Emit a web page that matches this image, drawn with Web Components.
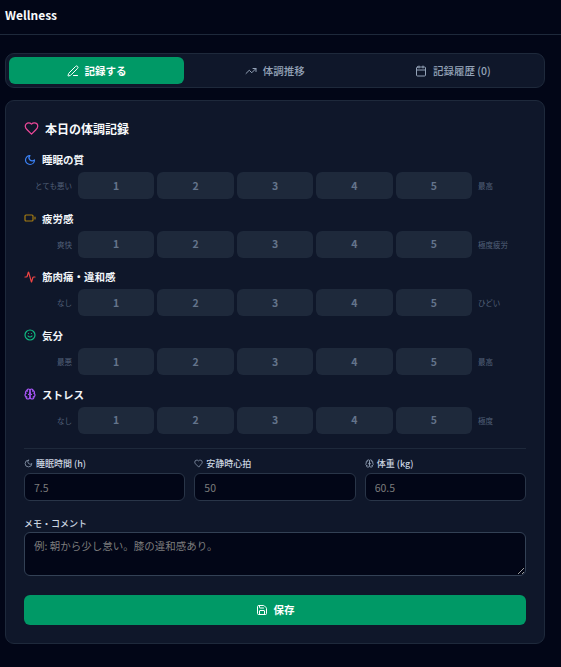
<!DOCTYPE html>
<html lang="ja">
<head>
<meta charset="utf-8">
<title>Wellness</title>
<style>
  html, body { margin: 0; height: 100%; background: #020617; }
  body {
    font-family: "Noto Sans CJK JP", "Noto Sans", sans-serif;
    color: #f8fafc;
    overflow: hidden;
  }
</style>
</head>
<body>
<wl-app></wl-app>
<script>
const BRAIN = '<path d="M12 5a3 3 0 1 0-5.997.125 4 4 0 0 0-2.526 5.77 4 4 0 0 0 .556 6.588A4 4 0 1 0 12 18Z"/><path d="M12 5a3 3 0 1 1 5.997.125 4 4 0 0 1 2.526 5.77 4 4 0 0 1-.556 6.588A4 4 0 1 1 12 18Z"/><path d="M15 13a4.5 4.5 0 0 1-3-4 4.5 4.5 0 0 1-3 4"/><path d="M17.599 6.5a3 3 0 0 0 .399-1.375"/><path d="M6.003 5.125A3 3 0 0 0 6.401 6.5"/><path d="M3.477 10.896a4 4 0 0 1 .585-.396"/><path d="M19.938 10.5a4 4 0 0 1 .585.396"/><path d="M6 18a4 4 0 0 1-1.967-.516"/><path d="M19.967 17.484A4 4 0 0 1 18 18"/>';
const ICONS = {
  pen: '<path d="M13 21h8"/><path d="M21.174 6.812a1 1 0 0 0-3.986-3.987L3.842 16.174a2 2 0 0 0-.5.83l-1.321 4.352a.5.5 0 0 0 .623.622l4.353-1.32a2 2 0 0 0 .83-.497z"/>',
  trend: '<path d="M16 7h6v6"/><path d="m22 7-8.5 8.5-5-5L2 17"/>',
  calendar: '<path d="M8 2v4"/><path d="M16 2v4"/><rect width="18" height="18" x="3" y="4" rx="2"/><path d="M3 10h18"/>',
  heart: '<path d="M19 14c1.49-1.46 3-3.21 3-5.5A5.5 5.5 0 0 0 16.5 3c-1.76 0-3 .5-4.5 2-1.5-1.5-2.74-2-4.5-2A5.5 5.5 0 0 0 2 8.5c0 2.3 1.5 4.05 3 5.5l7 7Z"/>',
  moon: '<path d="M12 3a6 6 0 0 0 9 9 9 9 0 1 1-9-9Z"/>',
  battery: '<rect width="16" height="12" x="2" y="6" rx="2"/><path d="M22 14v-4"/>',
  activity: '<path d="M22 12h-2.48a2 2 0 0 0-1.93 1.46l-2.35 8.36a.25.25 0 0 1-.48 0L9.24 2.18a.25.25 0 0 0-.48 0l-2.35 8.36A2 2 0 0 1 4.49 12H2"/>',
  smile: '<circle cx="12" cy="12" r="10"/><path d="M8 14s1.5 2 4 2 4-2 4-2"/><line x1="9" x2="9.01" y1="9" y2="9"/><line x1="15" x2="15.01" y1="9" y2="9"/>',
  brain: BRAIN,
  weight: BRAIN,
  save: '<path d="M15.2 3a2 2 0 0 1 1.4.6l3.8 3.8a2 2 0 0 1 .6 1.4V19a2 2 0 0 1-2 2H5a2 2 0 0 1-2-2V5a2 2 0 0 1 2-2z"/><path d="M17 21v-7a1 1 0 0 0-1-1H8a1 1 0 0 0-1 1v7"/><path d="M7 3v4a1 1 0 0 0 1 1h7"/>'
};

class WlIcon extends HTMLElement {
  connectedCallback() {
    const root = this.attachShadow({ mode: 'open' });
    const size = this.getAttribute('size') || 12;
    const name = this.getAttribute('name');
    const color = this.getAttribute('color') || 'currentColor';
    const stroke = this.getAttribute('stroke') || 2;
    root.innerHTML = `
      <style>
        :host { display: inline-flex; flex: none; width: ${size}px; height: ${size}px; }
        svg { display: block; width: 100%; height: 100%; }
      </style>
      <svg viewBox="0 0 24 24" fill="none" stroke="${color}" stroke-width="${stroke}" stroke-linecap="round" stroke-linejoin="round">${ICONS[name]}</svg>
    `;
  }
}

class WlHeader extends HTMLElement {
  connectedCallback() {
    this.attachShadow({ mode: 'open' }).innerHTML = `
      <style>
        :host {
          display: flex;
          align-items: center;
          height: 29px;
          padding: 0 5px 5px;
          border-bottom: 1px solid #1e293b;
          font-size: 12px;
          font-weight: 700;
          color: #f8fafc;
        }
      </style>
      <slot></slot>
    `;
  }
}

class WlTabs extends HTMLElement {
  connectedCallback() {
    this.attachShadow({ mode: 'open' }).innerHTML = `
      <style>
        :host {
          display: grid;
          grid-template-columns: repeat(3, 1fr);
          gap: 3px;
          padding: 3px;
          margin-right: 0.5px;
          background: #0f172a;
          border: 1px solid #1e293b;
          border-radius: 9px;
        }
      </style>
      <slot></slot>
    `;
  }
}

class WlTab extends HTMLElement {
  connectedCallback() {
    this.attachShadow({ mode: 'open' }).innerHTML = `
      <style>
        :host {
          display: flex;
          align-items: center;
          justify-content: center;
          gap: 6px;
          height: 27px;
          border-radius: 6px;
          font-size: 10.5px;
          font-weight: 500;
          color: #94a3b8;
        }
        :host([active]) { background: #009966; color: #fff; font-weight: 700; }
      </style>
      <wl-icon name="${this.getAttribute('icon')}" size="12"></wl-icon>
      <slot></slot>
    `;
  }
}

class WlCard extends HTMLElement {
  connectedCallback() {
    this.attachShadow({ mode: 'open' }).innerHTML = `
      <style>
        :host {
          display: block;
          padding: 18px;
          background: #0f172a;
          border: 1px solid #1e293b;
          border-radius: 9px;
        }
        .title {
          display: flex;
          align-items: center;
          gap: 6px;
          height: 18px;
          margin-bottom: 15.5px;
          font-size: 12px;
          font-weight: 700;
          color: #f8fafc;
        }
      </style>
      <div class="title">
        <wl-icon name="heart" size="15" color="#ec4899"></wl-icon>
        <span>${this.getAttribute('heading')}</span>
      </div>
      <slot></slot>
    `;
  }
}

class WlRating extends HTMLElement {
  connectedCallback() {
    const buttons = [1, 2, 3, 4, 5].map(n => `<button type="button">${n}</button>`).join('');
    this.attachShadow({ mode: 'open' }).innerHTML = `
      <style>
        :host { display: block; margin-bottom: 12px; }
        .label {
          display: flex;
          align-items: center;
          gap: 6px;
          height: 14px;
          margin-bottom: 5.5px;
          font-size: 10.5px;
          font-weight: 700;
          color: #f1f5f9;
        }
        .scale { display: flex; align-items: center; gap: 6px; }
        .side {
          flex: none;
          width: 48px;
          font-size: 7.5px;
          color: #526079;
        }
        .low { text-align: right; }
        .buttons {
          flex: 1;
          display: grid;
          grid-template-columns: repeat(5, 1fr);
          gap: 3px;
        }
        button {
          height: 27.17px;
          padding: 0 0 1px;
          border: 0;
          border-radius: 6px;
          background: #1e293b;
          color: #64748b;
          font: 700 10.5px "Noto Sans CJK JP", "Noto Sans", sans-serif;
        }
      </style>
      <div class="label">
        <wl-icon name="${this.getAttribute('icon')}" size="12" stroke="2.4" color="${this.getAttribute('color')}"></wl-icon>
        <span>${this.getAttribute('label')}</span>
      </div>
      <div class="scale">
        <span class="side low">${this.getAttribute('low')}</span>
        <div class="buttons">${buttons}</div>
        <span class="side">${this.getAttribute('high')}</span>
      </div>
    `;
  }
}

class WlField extends HTMLElement {
  connectedCallback() {
    const icon = this.getAttribute('icon');
    const hint = this.getAttribute('hint');
    const control = this.hasAttribute('multiline')
      ? `<textarea placeholder="${hint}"></textarea>`
      : `<input type="text" placeholder="${hint}">`;
    this.attachShadow({ mode: 'open' }).innerHTML = `
      <style>
        :host { display: block; min-width: 0; }
        .label {
          display: flex;
          align-items: center;
          gap: 3px;
          height: 12px;
          margin-bottom: 3px;
          font-size: 9px;
          font-weight: 500;
          color: #cbd5e1;
        }
        .label wl-icon { color: #94a3b8; }
        input, textarea {
          display: block;
          box-sizing: border-box;
          width: 100%;
          margin: 0;
          background: #020617;
          border: 1px solid #293548;
          border-radius: 6px;
          color: #f8fafc;
          font: 400 10.5px "Noto Sans CJK JP", "Noto Sans", sans-serif;
          outline: none;
        }
        input { height: 28.5px; padding: 0 9px; }
        textarea { height: 43.5px; padding: 5px 9px; border-color: #334155; }
        ::placeholder { color: #7c7c7c; opacity: 1; }
      </style>
      <div class="label">
        ${icon ? `<wl-icon name="${icon}" size="9"></wl-icon>` : ''}
        <span>${this.getAttribute('label')}</span>
      </div>
      ${control}
    `;
  }
}

class WlSaveButton extends HTMLElement {
  connectedCallback() {
    this.attachShadow({ mode: 'open' }).innerHTML = `
      <style>
        :host {
          display: flex;
          align-items: center;
          justify-content: center;
          gap: 6px;
          height: 30px;
          border-radius: 6px;
          background: #009966;
          color: #fff;
          font-size: 10.5px;
          font-weight: 700;
        }
      </style>
      <wl-icon name="save" size="12"></wl-icon>
      <slot></slot>
    `;
  }
}

class WlApp extends HTMLElement {
  connectedCallback() {
    this.attachShadow({ mode: 'open' }).innerHTML = `
      <style>
        :host { display: block; }
        main {
          display: flex;
          flex-direction: column;
          gap: 12px;
          padding: 18px 16px 0 5px;
        }
        hr {
          height: 1px;
          margin: 14px 0 9px;
          border: 0;
          background: #1e293b;
        }
        .metrics {
          display: grid;
          grid-template-columns: repeat(3, 1fr);
          gap: 9px;
          margin-bottom: 16px;
        }
        wl-save-button { margin-top: 19px; }
      </style>
      <wl-header>Wellness</wl-header>
      <main>
        <wl-tabs>
          <wl-tab icon="pen" active>記録する</wl-tab>
          <wl-tab icon="trend">体調推移</wl-tab>
          <wl-tab icon="calendar">記録履歴 (0)</wl-tab>
        </wl-tabs>
        <wl-card heading="本日の体調記録">
          <wl-rating icon="moon" color="#3b82f6" label="睡眠の質" low="とても悪い" high="最高"></wl-rating>
          <wl-rating icon="battery" color="#a67c12" label="疲労感" low="爽快" high="極度疲労"></wl-rating>
          <wl-rating icon="activity" color="#ef4444" label="筋肉痛・違和感" low="なし" high="ひどい"></wl-rating>
          <wl-rating icon="smile" color="#10b981" label="気分" low="最悪" high="最高"></wl-rating>
          <wl-rating icon="brain" color="#a855f7" label="ストレス" low="なし" high="極度"></wl-rating>
          <hr>
          <div class="metrics">
            <wl-field icon="moon" label="睡眠時間 (h)" hint="7.5"></wl-field>
            <wl-field icon="heart" label="安静時心拍" hint="50"></wl-field>
            <wl-field icon="weight" label="体重 (kg)" hint="60.5"></wl-field>
          </div>
          <wl-field multiline label="メモ・コメント" hint="例: 朝から少し怠い。膝の違和感あり。"></wl-field>
          <wl-save-button>保存</wl-save-button>
        </wl-card>
      </main>
    `;
  }
}

customElements.define('wl-icon', WlIcon);
customElements.define('wl-header', WlHeader);
customElements.define('wl-tabs', WlTabs);
customElements.define('wl-tab', WlTab);
customElements.define('wl-card', WlCard);
customElements.define('wl-rating', WlRating);
customElements.define('wl-field', WlField);
customElements.define('wl-save-button', WlSaveButton);
customElements.define('wl-app', WlApp);
</script>
</body>
</html>
